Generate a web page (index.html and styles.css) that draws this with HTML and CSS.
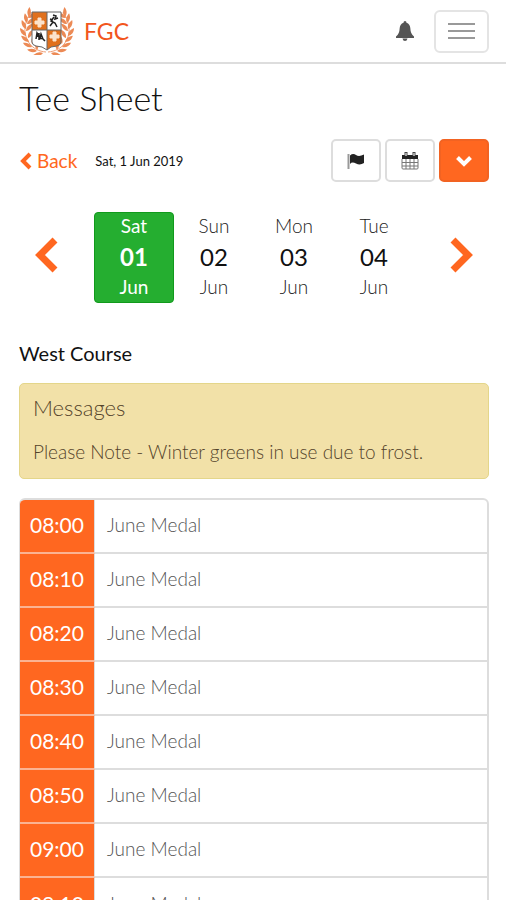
FILE: index.html
```html
<!DOCTYPE html>
<html lang="en">
<head>
    <meta charset="UTF-8">
    <meta name="viewport" content="width=device-width, initial-scale=1.0">
    <title>Tee Sheet</title>
    <link rel="stylesheet" href="styles.css">
</head>
<body>
    <header class="navbar">
        <a href="#" class="brand">
            <svg class="crest" viewBox="0 0 54 48" aria-hidden="true">
                <defs>
                    <path id="leaf" d="M0 0 C-4 -1 -6 -4 -6 -8 C-2 -6 0 -4 0 0Z"/>
                    <g id="branch" fill="#ec8a55">
                        <path d="M26 45 C12 44 4 33 5 20 Q6 11 11 5" fill="none" stroke="#f0a078"/>
                        <use href="#leaf" transform="translate(23 46) rotate(-65)"/>
                        <use href="#leaf" transform="translate(17 44) rotate(-45)"/>
                        <use href="#leaf" transform="translate(12 40) rotate(-28)"/>
                        <use href="#leaf" transform="translate(9 35) rotate(-15)"/>
                        <use href="#leaf" transform="translate(6 29)"/>
                        <use href="#leaf" transform="translate(6 22) rotate(12)"/>
                        <use href="#leaf" transform="translate(7 16) rotate(25)"/>
                        <use href="#leaf" transform="translate(9 10) rotate(40)"/>
                        <use href="#leaf" transform="translate(17 43) rotate(35)"/>
                        <use href="#leaf" transform="translate(12 37) rotate(55)"/>
                        <use href="#leaf" transform="translate(8 31) rotate(68)"/>
                        <use href="#leaf" transform="translate(6 24) rotate(80)"/>
                        <use href="#leaf" transform="translate(7 17) rotate(90)"/>
                        <use href="#leaf" transform="translate(8 11) rotate(95)"/>
                    </g>
                    <clipPath id="shield">
                        <path d="M12 5 H41 V35 Q41 38 37 39 L31 40 L27 43 L22 40 L16 39 Q12 38 12 35Z"/>
                    </clipPath>
                </defs>
                <use href="#branch"/>
                <use href="#branch" transform="translate(54 0) scale(-1 1)"/>
                <g clip-path="url(#shield)">
                    <path d="M12 5h29v38H12z" fill="#fff"/>
                    <path d="M12 5h15v18H12zM27 23h14v20H27z" fill="#e0701c"/>
                    <path d="M27 5v38M12 23h29" stroke="#666"/>
                </g>
                <path d="M12 5 H41 V35 Q41 38 37 39 L31 40 L27 43 L22 40 L16 39 Q12 38 12 35Z" fill="none" stroke="#666"/>
                <path d="M18 11h3v3h3v3h-3v3h-3v-3h-3v-3h3zM33 25h3v3h3v3h-3v3h-3v-3h-3v-3h3z" fill="#fbe3cc" stroke="#fbe3cc"/>
                <path d="M33 8l3 1-1 3 3-1M34 10l-3 4 4 2 2 4M33 15l-3 4M30 12l3 1" fill="none" stroke="#222" stroke-width="1.500"/>
                <path d="M16 32l1-6 3 5 1-4 2 5 2 2M16 28l6 4M19 26v7" fill="none" stroke="#222" stroke-width="1.500"/>
            </svg>
            <span>FGC</span>
        </a>
        <div class="nav-actions">
            <button type="button" class="bell" aria-label="Notifications">
                <svg width="18" height="20" viewBox="0 0 18 20" fill="#555">
                    <path d="M9 0q1.500 0 1.500 1.700Q14 3 14.300 7q.2 6 3.700 8.500V17H0v-1.500Q3.500 13 3.700 7 4 3 7.500 1.700 7.500 0 9 0zM6.500 17.500h5Q11 20 9 20t-2.500-2.500z"/>
                </svg>
            </button>
            <button type="button" class="menu-toggle" aria-label="Menu">
                <span class="bar"></span>
                <span class="bar"></span>
                <span class="bar"></span>
            </button>
        </div>
    </header>

    <main class="container">
        <h1>Tee Sheet</h1>

        <div class="toolbar">
            <a href="#" class="back">
                <svg width="13" height="18" viewBox="0 0 13 18" fill="none" stroke="#ff6720" stroke-width="4">
                    <path d="M11 2 L4 9 L11 16"/>
                </svg>
                Back
            </a>
            <span class="date">Sat, 1 Jun 2019</span>
            <div class="btn-group">
                <button type="button" class="btn" aria-label="Start tee">
                    <svg width="18" height="16" viewBox="0 0 18 16">
                        <path d="M1.500 1v15" stroke="#999" stroke-width="2"/>
                        <path d="M3 2.500Q6 0 9 2t8-.5V10q-4 2.500-8 .5T3 11z" fill="#222"/>
                    </svg>
                </button>
                <button type="button" class="btn" aria-label="Calendar">
                    <svg width="18" height="18" viewBox="0 0 18 18">
                        <path d="M1 3h16v4H1z" fill="#222"/>
                        <path d="M1 7v9q0 1 1 1h14q1 0 1-1V7M5 7v10M9 7v10M13 7v10M1 10.500h16M1 14h16" fill="none" stroke="#777"/>
                        <path d="M5 0v4M13 0v4" stroke="#444" stroke-width="3"/>
                        <path d="M5 1v3M13 1v3" stroke="#fff"/>
                    </svg>
                </button>
                <button type="button" class="btn btn-primary" aria-label="More">
                    <svg width="16" height="12" viewBox="0 0 16 12" fill="none" stroke="#fff" stroke-width="4">
                        <path d="M1.500 2.500 L8 9 L14.500 2.500"/>
                    </svg>
                </button>
            </div>
        </div>

        <nav class="days" aria-label="Days">
            <button type="button" class="arrow" aria-label="Previous">
                <svg width="23" height="36" viewBox="0 0 23 36" fill="none" stroke="#ff6720" stroke-width="7">
                    <path d="M20 3 L5 18 L20 33"/>
                </svg>
            </button>
            <div class="day-list">
                <a href="#" class="day active"><span>Sat</span><strong>01</strong><span>Jun</span></a>
                <a href="#" class="day"><span>Sun</span><strong>02</strong><span>Jun</span></a>
                <a href="#" class="day"><span>Mon</span><strong>03</strong><span>Jun</span></a>
                <a href="#" class="day"><span>Tue</span><strong>04</strong><span>Jun</span></a>
            </div>
            <button type="button" class="arrow" aria-label="Next">
                <svg width="23" height="36" viewBox="0 0 23 36" fill="none" stroke="#ff6720" stroke-width="7">
                    <path d="M3 3 L18 18 L3 33"/>
                </svg>
            </button>
        </nav>

        <h2>West Course</h2>

        <section class="alert">
            <h3>Messages</h3>
            <p>Please Note - Winter greens in use due to frost.</p>
        </section>

        <table class="tee-times">
            <tbody>
                <tr><th scope="row">08:00</th><td>June Medal</td></tr>
                <tr><th scope="row">08:10</th><td>June Medal</td></tr>
                <tr><th scope="row">08:20</th><td>June Medal</td></tr>
                <tr><th scope="row">08:30</th><td>June Medal</td></tr>
                <tr><th scope="row">08:40</th><td>June Medal</td></tr>
                <tr><th scope="row">08:50</th><td>June Medal</td></tr>
                <tr><th scope="row">09:00</th><td>June Medal</td></tr>
                <tr><th scope="row">09:10</th><td>June Medal</td></tr>
            </tbody>
        </table>
    </main>
</body>
</html>
```
FILE: styles.css
```css
* {
    box-sizing: border-box;
}
body {
    margin: 0;
    font-family: Lato, "Liberation Sans", sans-serif;
    font-size: 19px;
    line-height: 24px;
    color: #111;
    background-color: #fff;
}
button {
    font: inherit;
    padding: 0;
    cursor: pointer;
}
a {
    text-decoration: none;
}
svg {
    display: block;
}
h1, h2, h3, p {
    margin: 0;
    font-weight: 400;
}

/* Navbar */
.navbar {
    display: flex;
    justify-content: space-between;
    align-items: center;
    height: 64px;
    padding: 0 17px 0 20px;
    border-bottom: 2px solid #ddd;
}
.brand {
    display: flex;
    align-items: center;
    gap: 10px;
    font-size: 23px;
    color: #f2561d;
}
.crest {
    width: 54px;
    height: 48px;
}
.nav-actions {
    display: flex;
    align-items: center;
    gap: 20px;
}
.bell {
    border: none;
    background: none;
}
.menu-toggle {
    display: flex;
    flex-direction: column;
    justify-content: center;
    align-items: center;
    gap: 5px;
    width: 55px;
    height: 43px;
    border: 2px solid #e4e4e4;
    border-radius: 6px;
    background-color: #fff;
}
.bar {
    width: 27px;
    height: 2px;
    background-color: #999;
}

/* Content */
.container {
    padding: 12px 17px 20px 19px;
}
h1 {
    font-size: 34px;
    line-height: 44px;
    font-weight: 300;
}
.toolbar {
    display: flex;
    align-items: center;
    margin-top: 19px;
}
.back {
    display: flex;
    align-items: center;
    gap: 5px;
    color: #ff6720;
}
.date {
    margin-left: 18px;
    font-size: 13px;
}
.btn-group {
    display: flex;
    gap: 4px;
    margin-left: auto;
}
.btn {
    display: flex;
    justify-content: center;
    align-items: center;
    width: 50px;
    height: 43px;
    border: 2px solid #ddd;
    border-radius: 5px;
    background-color: #fff;
}
.btn-primary {
    border-color: #f26322;
    background-color: #ff6720;
}

/* Day picker */
.days {
    display: flex;
    justify-content: space-between;
    align-items: center;
    margin-top: 30px;
}
.arrow {
    padding: 0 16px 6px;
    border: none;
    background: none;
}
.day-list {
    display: flex;
}
.day {
    display: flex;
    flex-direction: column;
    align-items: center;
    width: 80px;
    height: 91px;
    border: 1px solid transparent;
    border-radius: 4px;
    color: #222;
    font-weight: 300;
}
.day span {
    line-height: 26px;
}
.day strong {
    font-size: 24px;
    line-height: 35px;
    font-weight: 400;
    color: #111;
}
.day.active {
    border-color: #119a1c;
    background-color: #25ae30;
    color: #fff;
    font-weight: 400;
}
.day.active strong {
    color: #fff;
    font-weight: 700;
}

h2 {
    margin-top: 38px;
    font-size: 20px;
}
.alert {
    margin-top: 18px;
    padding: 12px 13px 14px;
    border: 1px solid #e4d68a;
    border-radius: 5px;
    background-color: #f2e1a8;
    color: #54432a;
}
.alert h3 {
    font-size: 22px;
    font-weight: 300;
}
.alert p {
    margin-top: 20px;
    font-size: 19px;
    font-weight: 300;
}

/* Tee times */
.tee-times {
    width: 100%;
    margin-top: 19px;
    border: 2px solid #ddd;
    border-left-width: 1px;
    border-radius: 6px;
    border-spacing: 0;
    overflow: hidden;
}
.tee-times th,
.tee-times td {
    height: 54px;
    padding: 0 0 3px;
    border-bottom: 2px solid #ddd;
    font-weight: 300;
}
.tee-times tr:last-child th,
.tee-times tr:last-child td {
    border-bottom: none;
}
.tee-times th {
    width: 75px;
    border-right: 1px solid #ddd;
    border-bottom-color: #fbb392;
    background-color: #ff6720;
    color: #fff;
    font-size: 21px;
    font-weight: 400;
}
.tee-times td {
    padding-left: 12px;
    color: #555;
}
```
